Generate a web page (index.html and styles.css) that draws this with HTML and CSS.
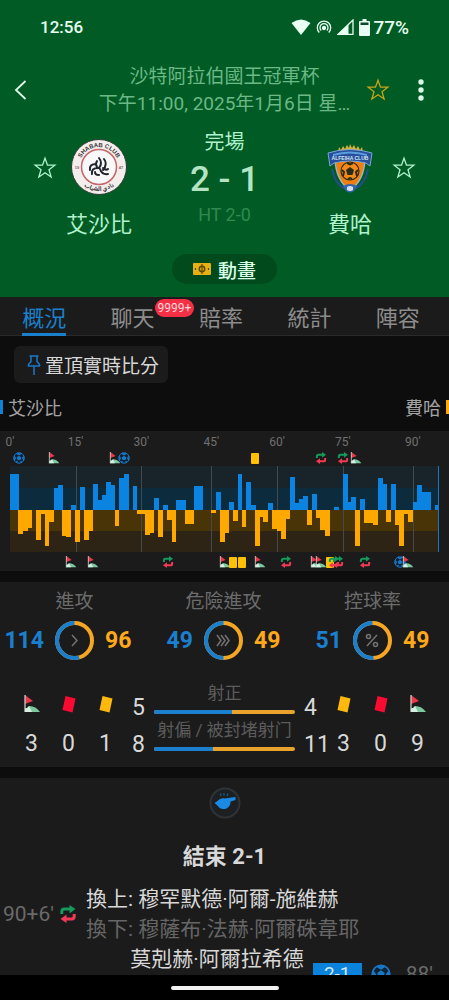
FILE: index.html
```html
<!DOCTYPE html>
<html lang="zh-Hant">
<head>
    <meta charset="UTF-8">
    <meta name="viewport" content="width=device-width, initial-scale=1.0">
    <title>艾沙比 2 - 1 費哈</title>
    <link rel="stylesheet" href="styles.css">
</head>
<body>
    <!-- shared icons -->
    <svg class="defs" aria-hidden="true">
        <symbol id="star" viewBox="0 0 24 24">
            <path d="M12 2.200l2.500 7h7.300l-5.800 4.500 2.100 7.300-6.100-4.300L5.900 21 8 13.700 2.200 9.200h7.300z" fill="none" stroke="currentColor" stroke-width="1.300"/>
        </symbol>
        <symbol id="ball" viewBox="0 0 24 24">
            <circle cx="12" cy="12" r="10.500" fill="#0c2436" stroke="#1a78c8" stroke-width="2"/>
            <path d="M12 7.500l4.500 3.300-1.700 5.200H9.200l-1.700-5.200z" fill="#1a78c8"/>
            <path d="M8 2.500L12 5l4-2.500M22 9l-2.500 3.500L22 16M2 9l2.500 3.500L2 16M7 21l1.500-3M17 21l-1.500-3" fill="none" stroke="#1a78c8" stroke-width="3"/>
        </symbol>
        <symbol id="corner" viewBox="0 0 16 18">
            <path d="M1 0l8 6-8 3z" fill="#e8384a"/>
            <path d="M1 17V0" stroke="#d8d8d8" stroke-width="1.200"/>
            <path d="M1 17V13.500Q4 13 5 11q7 0 11 6z" fill="#7cc9a0"/>
            <path d="M1 17V13.500Q4 13 5 11l3 6z" fill="#d8eee2"/>
        </symbol>
        <symbol id="yellow" viewBox="0 0 14 18">
            <path d="M3.500 1L13.500 3.500l-3 14L.5 15z" fill="#ffb80c"/>
        </symbol>
        <symbol id="red" viewBox="0 0 14 18">
            <path d="M3.500 1L13.500 3.500l-3 14L.5 15z" fill="#fb0a32"/>
        </symbol>
        <symbol id="booking" viewBox="0 0 12 12">
            <rect x="2" y="1" width="8" height="11" rx="1" fill="#ffc107"/>
        </symbol>
        <symbol id="sub" viewBox="0 0 16 18">
            <path d="M1.800 9V6.500q0-2.500 2.500-2.500H10" fill="none" stroke="#159a5c" stroke-width="3"/>
            <path d="M9.500 0L15.500 4l-6 4.500z" fill="#159a5c"/>
            <path d="M14.200 9v2.500q0 2.500-2.500 2.500H6" fill="none" stroke="#f23a56" stroke-width="3"/>
            <path d="M6.500 9.500L.5 14l6 4z" fill="#f23a56"/>
        </symbol>
    </svg>

    <header class="match-header">
        <div class="status-bar">
            <span class="clock">12:56</span>
            <span class="status-icons">
                <svg width="20" height="16" viewBox="0 0 20 16"><path d="M.5 4Q10-3 19.500 4L10 16z" fill="currentColor"/></svg>
                <svg width="16" height="16" viewBox="0 0 16 16" fill="none" stroke="currentColor" stroke-width="1.300"><path d="M3.300 13.500A6.700 6.700 0 1 1 12.700 13.500M5.200 11.500A4 4 0 1 1 10.800 11.500"/><circle cx="8" cy="9" r="1.500" fill="currentColor"/></svg>
                <svg width="17" height="16" viewBox="0 0 17 16"><path d="M16 1v14.500H1z" fill="none" stroke="currentColor" stroke-width="1.300"/><path d="M11.500 5v11H0z" fill="currentColor"/></svg>
                <svg width="11" height="17" viewBox="0 0 11 17"><path d="M3.500 0h4v2H10q1 0 1 1v13q0 1-1 1H1q-1 0-1-1V3q0-1 1-1h2.500z" fill="currentColor"/><path d="M1.500 3.500h8V6h-8z" fill="#0f4a28"/></svg>
                <span>77%</span>
            </span>
        </div>

        <div class="top-bar">
            <button class="icon-btn back" aria-label="返回">
                <svg width="13" height="20" viewBox="0 0 13 20"><path d="M11.500 1L2 10l9.500 9" fill="none" stroke="currentColor" stroke-width="1.800"/></svg>
            </button>
            <div class="title">
                <div>沙特阿拉伯國王冠軍杯</div>
                <div>下午11:00, 2025年1月6日 星…</div>
            </div>
            <div class="top-actions">
                <button class="icon-btn favourite" aria-label="收藏"><svg width="24" height="24"><use href="#star"/></svg></button>
                <button class="icon-btn more" aria-label="更多">
                    <svg width="6" height="22" viewBox="0 0 6 22" fill="currentColor"><circle cx="3" cy="3" r="2.700"/><circle cx="3" cy="11" r="2.700"/><circle cx="3" cy="19" r="2.700"/></svg>
                </button>
            </div>
        </div>

        <div class="scoreboard">
            <button class="icon-btn team-star" aria-label="收藏艾沙比"><svg width="24" height="24"><use href="#star"/></svg></button>
            <div class="team">
                <svg width="56" height="56" viewBox="0 0 56 56">
                    <circle cx="28" cy="28" r="27.500" fill="#f3eeec" stroke="#2b3a30"/>
                    <circle cx="28" cy="28" r="17.500" fill="#f8f8f8" stroke="#c4666a" stroke-width="1.500"/>
                    <path id="arc-top" d="M8 28a20 20 0 0 1 40 0" fill="none"/>
                    <path id="arc-bottom" d="M4 28a24 24 0 0 0 48 0" fill="none"/>
                    <text class="crest-text"><textPath href="#arc-top" startOffset="50%">SHABAB CLUB</textPath></text>
                    <text class="crest-text"><textPath href="#arc-bottom" startOffset="50%">نادي الشباب</textPath></text>
                    <text class="crest-year" x="6" y="30">19</text>
                    <text class="crest-year" x="50" y="30">47</text>
                    <g fill="none" stroke="#20242c" stroke-width="2" stroke-linecap="round">
                        <path d="M28 19q4 5 0 10M33 20q4 5-1 11M26 22q-2 3 0 6M25 25q-7 0-6 6M27 29q-7 0-6 6M24 33q0 3 4 3M29 30q2 6 8 5M32 29q3 3 5 1"/>
                    </g>
                </svg>
                <span class="team-name">艾沙比</span>
            </div>
            <div class="score">
                <div class="state">完場</div>
                <div class="result">2 - 1</div>
                <div class="half-time">HT 2-0</div>
            </div>
            <div class="team">
                <svg width="56" height="56" viewBox="0 0 56 56">
                    <path d="M16 13l1-5 2 3 2-4 2 3 2-4 2 3 1-4 2 4 2-3 2 4 2-3 2 4 2-3 1 5z" fill="#d7b23a"/>
                    <path d="M10 30q3 16 14 20M46 30q-3 16-14 20" fill="none" stroke="#214e86" stroke-width="2"/>
                    <path d="M13 20q1 22 15 31 14-9 15-31z" fill="#f07e12" stroke="#9fb4bc" stroke-width="1.500"/>
                    <path d="M6 14q22-7 44 0l-2 13-4-3q-16-4-32 0l-4 3z" fill="#254e9c" stroke="#7fa6cf"/>
                    <path d="M11 15q17-5 34 0v2q-17-5-34 0z" fill="#5b9ede"/>
                    <text class="crest-banner" x="28" y="21">ALFEIHA CLUB</text>
                    <circle cx="28" cy="32" r="9" fill="#f58a1a" stroke="#2a2c18" stroke-width="1.200"/>
                    <path d="M28 28l4 3-1.500 5h-5L24 31z" fill="#2a2c18"/>
                    <path d="M25 24l3 1.500 3-1.500M20 31l2 2-1 4M36 31l-2 2 1 4M26 40l2-1 2 1" fill="none" stroke="#2a2c18" stroke-width="2"/>
                    <path d="M21 47q7-4 14 0l-3 5q-4 3-8 0z" fill="#3665a8"/>
                    <path d="M25 48q3-2 6 0v3q-3 2-6 0z" fill="#d5e2ea"/>
                </svg>
                <span class="team-name">費哈</span>
            </div>
            <button class="icon-btn team-star" aria-label="收藏費哈"><svg width="24" height="24"><use href="#star"/></svg></button>
        </div>

        <button class="animation-btn">
            <svg width="18" height="12" viewBox="0 0 18 12"><rect width="18" height="12" rx="1" fill="#e9b012"/><path d="M9 1v10M2.500 5v2M15.500 5v2" fill="none" stroke="#5a4a0a" stroke-width="1.200"/><circle cx="9" cy="6" r="2.700" fill="none" stroke="#5a4a0a" stroke-width="1.500"/></svg>
            動畫
        </button>
    </header>

    <main>
        <nav class="tabs">
            <a href="#" class="active"><span>概況</span></a>
            <a href="#"><span>聊天<b class="badge">9999+</b></span></a>
            <a href="#"><span>賠率</span></a>
            <a href="#"><span>統計</span></a>
            <a href="#"><span>陣容</span></a>
        </nav>

        <button class="pin-btn">
            <svg width="14" height="20" viewBox="0 0 14 20" fill="none" stroke="#1a78c8" stroke-width="1.500"><path d="M2.500 1h9M4 1v5.500L1.500 9.500V11h11V9.500L10 6.500V1M7 11v9"/></svg>
            置頂實時比分
        </button>

        <div class="legend">
            <span class="home-key">艾沙比</span>
            <span class="away-key">費哈</span>
        </div>

        <section class="card timeline">
            <div class="track axis" id="axis"></div>
            <div class="track home-events" id="homeEvents"></div>
            <svg class="plot" id="plot" viewBox="0 0 98 86" preserveAspectRatio="none">
                <rect width="98" height="22" fill="#18242a"/>
                <rect y="22" width="98" height="22" fill="#0c2c3d"/>
                <rect y="44" width="98" height="21" fill="#493408"/>
                <rect y="65" width="98" height="21" fill="#2d2415"/>
            </svg>
            <div class="track away-events" id="awayEvents"></div>
        </section>

        <section class="card stats">
            <div class="dials">
                <div class="dial">
                    <h3>進攻</h3>
                    <b class="home">114</b>
                    <svg width="39" height="39" viewBox="0 0 39 39">
                        <circle class="ring ring-away" cx="19.500" cy="19.500" r="17.500"/>
                        <circle class="ring ring-home" cx="19.500" cy="19.500" r="17.500" pathLength="210" stroke-dasharray="114 96"/>
                        <path class="dial-icon" d="M17 14l5 5.500-5 5.500"/>
                    </svg>
                    <b class="away">96</b>
                </div>
                <div class="dial">
                    <h3>危險進攻</h3>
                    <b class="home">49</b>
                    <svg width="39" height="39" viewBox="0 0 39 39">
                        <circle class="ring ring-away" cx="19.500" cy="19.500" r="17.500"/>
                        <circle class="ring ring-home" cx="19.500" cy="19.500" r="17.500" pathLength="98" stroke-dasharray="49 49"/>
                        <path class="dial-icon" d="M13 14l4 5.500-4 5.500M17 14l4 5.500-4 5.500M21 14l4 5.500-4 5.500"/>
                    </svg>
                    <b class="away">49</b>
                </div>
                <div class="dial">
                    <h3>控球率</h3>
                    <b class="home">51</b>
                    <svg width="39" height="39" viewBox="0 0 39 39">
                        <circle class="ring ring-away" cx="19.500" cy="19.500" r="17.500"/>
                        <circle class="ring ring-home" cx="19.500" cy="19.500" r="17.500" pathLength="100" stroke-dasharray="51 49"/>
                        <path class="dial-icon" d="M24 14L14 25"/>
                        <circle class="dial-icon" cx="15.500" cy="15.500" r="2"/>
                        <circle class="dial-icon" cx="22.500" cy="23.500" r="2"/>
                    </svg>
                    <b class="away">49</b>
                </div>
            </div>

            <div class="counts">
                <div class="side">
                    <svg width="16" height="18"><use href="#corner"/></svg>
                    <svg width="14" height="18"><use href="#red"/></svg>
                    <svg width="14" height="18"><use href="#yellow"/></svg>
                    <span>3</span>
                    <span>0</span>
                    <span>1</span>
                </div>
                <div class="shots">
                    <span class="shots-home">5</span>
                    <div class="shots-bar">
                        <label for="onTarget">射正</label>
                        <meter id="onTarget" min="0" max="9" value="5"></meter>
                    </div>
                    <span class="shots-away">4</span>
                    <span class="shots-home">8</span>
                    <div class="shots-bar">
                        <label for="offTarget">射偏 / 被封堵射门</label>
                        <meter id="offTarget" min="0" max="19" value="8"></meter>
                    </div>
                    <span class="shots-away">11</span>
                </div>
                <div class="side">
                    <svg width="14" height="18"><use href="#yellow"/></svg>
                    <svg width="14" height="18"><use href="#red"/></svg>
                    <svg width="16" height="18"><use href="#corner"/></svg>
                    <span>3</span>
                    <span>0</span>
                    <span>9</span>
                </div>
            </div>
        </section>

        <section class="card feed">
            <svg class="whistle" width="32" height="32" viewBox="0 0 32 32">
                <circle cx="16" cy="16" r="14.500" fill="#1c2023" stroke="#303336" stroke-width="2"/>
                <path d="M5.500 16l3-2q3-3.500 7-2.500l11-1.500v3l-5 1.500q0 5-4 7-6 2-9-3z" fill="#1b8ae6"/>
                <path d="M12 9l-.5-2.500M15 8.500V6M18 9l1-2.500" stroke="#175b94" stroke-width="1.200"/>
            </svg>
            <h2>結束 2-1</h2>
            <div class="event">
                <time>90+6'</time>
                <svg width="16" height="18"><use href="#sub"/></svg>
                <div class="players">
                    <p>換上: 穆罕默德·阿爾-施維赫</p>
                    <p class="off">換下: 穆薩布·法赫·阿爾硃韋耶</p>
                </div>
            </div>
            <div class="event event-away">
                <div class="players">
                    <p>莫剋赫·阿爾拉希德</p>
                </div>
                <span class="goal-score">2-1</span>
                <svg width="20" height="20"><use href="#ball"/></svg>
                <time>88'</time>
            </div>
        </section>
    </main>

    <footer class="nav-bar"><span></span></footer>

    <script src="script.js"></script>
</body>
</html>
```
FILE: styles.css
```css
* {
    box-sizing: border-box;
}
body {
    margin: 0;
    height: 100vh;
    display: flex;
    flex-direction: column;
    overflow: hidden;
    background: #0d0d0d;
    color: #d8d8d8;
    font-family: Roboto, "Noto Sans CJK TC", sans-serif;
    font-size: 19px;
}
button {
    font: inherit;
    color: inherit;
    background: none;
    border: none;
    padding: 0;
    cursor: pointer;
}
h2, h3, p {
    margin: 0;
    font-weight: 400;
}
svg {
    display: block;
    flex-shrink: 0;
}
.defs {
    position: absolute;
    width: 0;
    height: 0;
}

/* header */
.match-header {
    flex-shrink: 0;
    background: #005c24;
    color: #b0f2cc;
    padding-bottom: 13px;
}
.status-bar {
    display: flex;
    justify-content: space-between;
    align-items: center;
    height: 54px;
    padding: 0 40px;
    color: #e8fff2;
    font-weight: 500;
}
.clock {
    font-size: 17px;
}
.status-icons {
    display: flex;
    align-items: center;
    gap: 5px;
}
.status-icons span {
    margin-left: -2px;
}
.top-bar {
    display: grid;
    grid-template-columns: 88px 1fr 88px;
    align-items: center;
    padding-top: 9px;
}
.icon-btn {
    display: flex;
    align-items: center;
    justify-content: center;
}
.back {
    margin-left: 14px;
    justify-self: start;
    color: #e0fbea;
}
.title {
    text-align: center;
    line-height: 27px;
    white-space: nowrap;
    color: #6cb886;
}
.top-actions {
    display: flex;
    align-items: center;
    gap: 28px;
    padding-left: 5px;
}
.favourite {
    color: #c9a416;
}
.more {
    color: #d8f8e4;
}
.scoreboard {
    display: grid;
    grid-template-columns: 24px 80px 1fr 80px 24px;
    column-gap: 2px;
    padding: 12px 33px 0;
    align-items: start;
}
.team-star {
    height: 56px;
    margin-top: 11px;
}
.team {
    display: flex;
    flex-direction: column;
    align-items: center;
    gap: 15px;
    padding-top: 10px;
}
.team-name {
    font-size: 22px;
    line-height: 30px;
}
.crest-text {
    font: 700 6px "Liberation Sans", sans-serif;
    fill: #3a3236;
    text-anchor: middle;
}
.crest-year {
    font: 700 4px "Liberation Sans", sans-serif;
    fill: #8c5a5c;
    text-anchor: middle;
}
.crest-banner {
    font: 700 5px "Liberation Sans", sans-serif;
    fill: #dbe8f4;
    text-anchor: middle;
}
.score {
    text-align: center;
}
.state {
    font-size: 20px;
    line-height: 26px;
}
.result {
    font-size: 35px;
    font-weight: 500;
    line-height: 50px;
    color: #b4e4c4;
}
.half-time {
    font-size: 18px;
    line-height: 20px;
    color: #2f8a50;
}
.animation-btn {
    display: flex;
    align-items: center;
    justify-content: center;
    gap: 7px;
    width: 105px;
    height: 30px;
    margin: 14px auto 0;
    border-radius: 15px;
    background: #004a1c;
    color: #d8ffe8;
    font-weight: 500;
}

/* tabs */
main {
    flex: 1;
    min-height: 0;
    overflow: hidden;
}
.tabs {
    display: flex;
    height: 39px;
    padding-right: 7px;
    background: #1b1b1b;
    border-bottom: 1px solid #2a2a2a;
    font-size: 22px;
}
.tabs a {
    flex: 1;
    display: flex;
    justify-content: center;
    color: #8c8c8c;
    text-decoration: none;
}
.tabs span {
    position: relative;
    height: 39px;
    line-height: 43px;
}
.tabs .active {
    color: #1a80cc;
}
.tabs .active span {
    border-bottom: 3px solid #1a80cc;
}
.badge {
    position: absolute;
    top: 2px;
    left: 100%;
    height: 18px;
    padding: 0 3px;
    border-radius: 9px;
    background: #f52f45;
    color: #ffd9dc;
    font-size: 12px;
    font-weight: 400;
    line-height: 18px;
}

.pin-btn {
    display: flex;
    align-items: center;
    gap: 4px;
    height: 37px;
    margin: 10px 0 0 14px;
    padding: 0 9px 0 13px;
    border-radius: 6px;
    background: #1b1b1b;
}
.legend {
    display: flex;
    justify-content: space-between;
    align-items: center;
    height: 48px;
    font-size: 18px;
    color: #a4a4a4;
}
.legend span {
    display: flex;
    align-items: center;
    gap: 5px;
}
.home-key::before,
.away-key::after {
    content: "";
    width: 3px;
    height: 14px;
    background: #0f82d8;
}
.away-key::after {
    background: #ffa90a;
}
.card {
    background: #1b1b1b;
    margin-bottom: 11px;
}

/* momentum chart */
.timeline {
    padding: 3px 10px 0;
}
.track {
    position: relative;
    height: 16px;
}
.track > * {
    position: absolute;
    top: 50%;
    transform: translate(-50%, -50%);
}
.axis {
    color: #707070;
    font-size: 12px;
}
.away-events {
    height: 19px;
}
.plot {
    width: 100%;
    height: 86px;
}

/* totals */
.dials {
    display: grid;
    grid-template-columns: repeat(3, 1fr);
    padding: 7px 2px 0 0;
}
.dial {
    display: grid;
    grid-template-columns: 1fr 39px 1fr;
    column-gap: 11px;
    align-items: center;
}
.dial h3 {
    grid-column: 1 / -1;
    text-align: center;
    font-size: 19px;
    line-height: 26px;
    margin-bottom: 6px;
    color: #6c6c6c;
}
.dial b {
    font-size: 23px;
}
.home {
    text-align: right;
    color: #1a7fcf;
}
.away {
    color: #ffa91a;
}
.ring {
    fill: none;
    stroke-width: 4;
}
.ring-away {
    stroke: #f5a623;
}
.ring-home {
    stroke: #1a7fcf;
    transform: rotate(-90deg) scaleY(-1);
    transform-origin: center;
}
.dial-icon {
    fill: none;
    stroke: #737373;
    stroke-width: 1.5;
}
.counts {
    display: grid;
    grid-template-columns: 111px 1fr 111px;
    padding: 22px 13px 5px;
    font-size: 23px;
}
.side {
    display: grid;
    grid-template-columns: repeat(3, 1fr);
    grid-template-rows: 43px 37px;
    place-items: center;
}
.shots {
    display: grid;
    grid-template-columns: 30px 1fr 30px;
    grid-template-rows: 43px 37px;
}
.shots > span {
    align-self: end;
    line-height: 35px;
}
.shots-home {
    text-align: right;
    padding-right: 9px;
}
.shots-away {
    padding-left: 9px;
}
.shots-bar {
    display: flex;
    flex-direction: column;
    justify-content: flex-end;
    padding-bottom: 11px;
}
.shots-bar label {
    text-align: center;
    white-space: nowrap;
    color: #5c5c5c;
    font-size: 17px;
    line-height: 26px;
    margin-bottom: 4px;
}
.shots-bar meter {
    appearance: none;
    display: block;
    flex-shrink: 0;
    width: 100%;
    height: 4px;
    border-radius: 2px;
    overflow: hidden;
}
.shots-bar meter::-webkit-meter-bar {
    height: 4px;
    border: none;
    border-radius: 0;
    background: #e9a22b;
}
.shots-bar meter::-webkit-meter-optimum-value {
    background: #1a7fcf;
}

/* match events */
.feed {
    padding-top: 9px;
    font-size: 21px;
}
.whistle {
    margin: 0 auto;
}
.feed h2 {
    text-align: center;
    font-size: 22px;
    font-weight: 700;
    line-height: 30px;
    padding: 23px 0 12px;
}
.event {
    display: flex;
    align-items: center;
    min-height: 60px;
    padding-left: 3px;
}
.event time {
    color: #6a6a6a;
}
.event time + svg {
    margin: 0 10px 0 6px;
}
.players {
    align-self: flex-start;
    line-height: 30px;
}
.off {
    color: #666;
}
.event-away {
    justify-content: flex-end;
    gap: 9px;
    padding-right: 16px;
}
.event-away time {
    margin-left: 6px;
}
.goal-score {
    width: 49px;
    background: #0b82dc;
    color: #cfe8fa;
    text-align: center;
    font-size: 19px;
    line-height: 22px;
}

.nav-bar {
    flex-shrink: 0;
    display: flex;
    align-items: center;
    justify-content: center;
    height: 25px;
    background: #000;
}
.nav-bar span {
    width: 108px;
    height: 4px;
    border-radius: 2px;
    background: #f2f2f2;
}
```
FILE: script.js
```js
// pressure for every minute of play, stoppage time included
const home = [
    36, 36, 0, 0, 0, 0, 0, 0, 0, 0, 22, 25, 0, 0, 5, 0, 23, 0, 0, 26,
    10, 15, 28, 25, 0, 32, 36, 0, 24, 0, 0, 0, 0, 12, 0, 5, 0, 0, 10, 10,
    0, 0, 24, 24, 0, 0, 0, 18, 0, 0, 8, 0, 36, 0, 28, 5, 0, 0, 0, 7,
    0, 0, 0, 0, 33, 7, 11, 14, 0, 16, 0, 0, 0, 0, 3, 0, 36, 8, 13, 0,
    11, 0, 0, 0, 32, 26, 0, 26, 0, 0, 0, 0, 8, 25, 18, 18, 0, 5
];
const away = [
    0, 0, 24, 21, 18, 0, 30, 4, 36, 12, 0, 0, 26, 27, 0, 32, 0, 30, 21, 0,
    0, 0, 0, 0, 16, 0, 0, 0, 0, 4, 4, 25, 23, 0, 27, 0, 10, 32, 0, 0,
    14, 14, 0, 0, 0, 0, 3, 0, 32, 23, 0, 11, 0, 17, 0, 0, 36, 7, 12, 0,
    19, 21, 29, 9, 0, 0, 0, 0, 15, 0, 8, 20, 26, 0, 0, 0, 0, 0, 0, 36,
    0, 13, 13, 15, 0, 0, 12, 0, 15, 36, 4, 12, 0, 0, 0, 0, 0, 0
];
const ticks = { 0: "0'", 15: "15'", 30: "30'", 46: "45'", 61: "60'", 76: "75'", 92: "90'" };
const homeEvents = [
    [2, 'ball'], [10, 'corner'], [24, 'corner'], [26, 'ball'],
    [56, 'booking'], [71, 'sub'], [76, 'sub'], [79, 'corner']
];
const awayEvents = [
    [14, 'corner'], [19, 'corner'], [36, 'sub'], [49, 'corner'], [51, 'booking'],
    [53, 'booking'], [57, 'corner'], [63, 'sub'], [70, 'corner'], [71, 'corner'],
    [73, 'booking'], [74, 'sub'], [75, 'sub'], [81, 'sub'], [89, 'ball'], [91, 'corner']
];
const total = home.length;
const plot = document.getElementById('plot');

function addRect(x, y, width, height, fill) {
    const rect = document.createElementNS('http://www.w3.org/2000/svg', 'rect');
    rect.setAttribute('x', x);
    rect.setAttribute('y', y);
    rect.setAttribute('width', width);
    rect.setAttribute('height', height);
    rect.setAttribute('fill', fill);
    rect.setAttribute('shape-rendering', 'crispEdges');
    plot.appendChild(rect);
}

function addEvents(id, events) {
    document.getElementById(id).innerHTML = events.map(([minute, icon]) =>
        `<svg width="12" height="12" style="left: ${minute / total * 100}%"><use href="#${icon}"/></svg>`
    ).join('');
}

for (const minute in ticks) {
    if (minute > 0) addRect(minute, 0, 0.25, 86, '#46494a');
}
for (let i = 0; i < total; i++) {
    if (home[i]) addRect(i, 44 - home[i], 1.1, home[i], '#0a84e0');
    if (away[i]) addRect(i - 0.1, 44, 1.1, away[i], '#ffa800');
}
addRect(total - 0.25, 0, 0.25, 86, '#1a78c0');

document.getElementById('axis').innerHTML = Object.entries(ticks).map(([minute, label]) =>
    `<span style="left: ${minute / total * 100}%">${label}</span>`
).join('');
addEvents('homeEvents', homeEvents);
addEvents('awayEvents', awayEvents);
```
